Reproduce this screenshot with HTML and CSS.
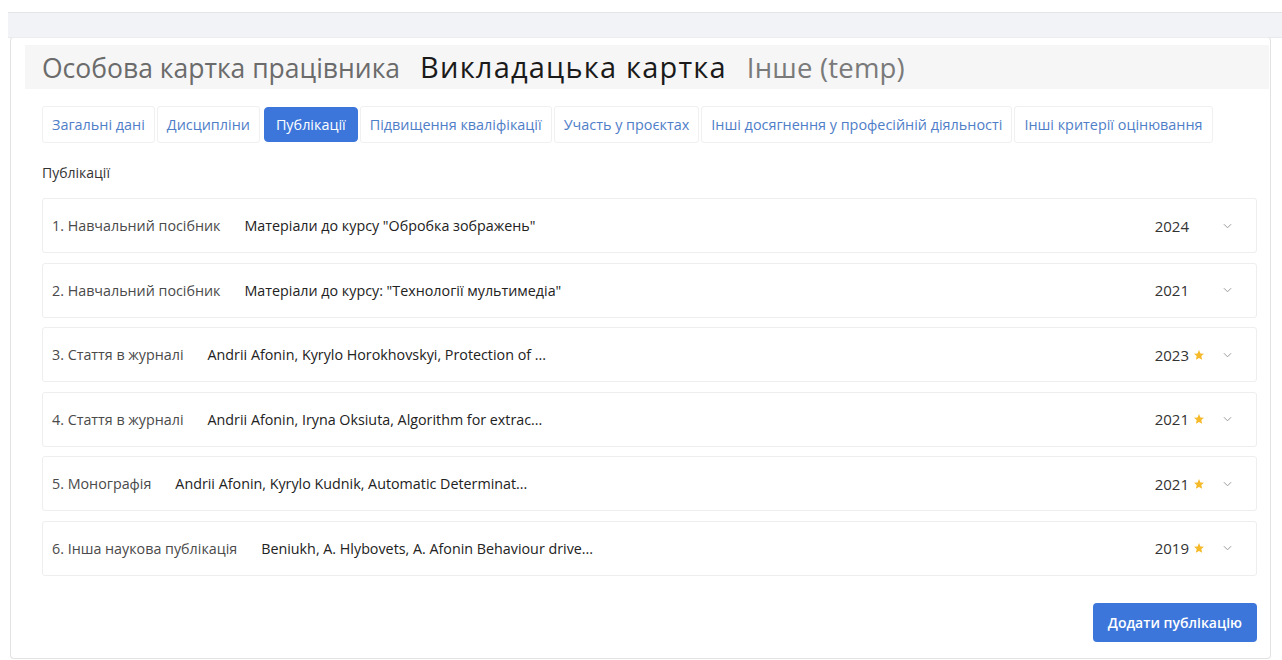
FILE: index.html
```html
<!DOCTYPE html>
<html lang="uk">
<head>
<meta charset="utf-8">
<title>Особова картка працівника</title>
<link rel="stylesheet" href="styles.css">
</head>
<body>
<div class="topbar"></div>
<main class="card">
  <header class="card-head">
    <h1 class="title">
      <span class="muted">Особова картка працівника</span>
      <span class="strong">Викладацька картка</span>
      <span class="muted light">Інше (temp)</span>
    </h1>
  </header>
  <div class="card-body">
    <nav class="tabs">
      <a class="tab">Загальні дані</a>
      <a class="tab">Дисципліни</a>
      <a class="tab active">Публікації</a>
      <a class="tab">Підвищення кваліфікації</a>
      <a class="tab">Участь у проєктах</a>
      <a class="tab">Інші досягнення у професійній діяльності</a>
      <a class="tab">Інші критерії оцінювання</a>
    </nav>
    <div class="section-label">Публікації</div>
    <ul class="pub-list">
      <li class="pub">
        <span class="pub-type">1. Навчальний посібник</span>
        <span class="pub-title">Матеріали до курсу "Обробка зображень"</span>
        <span class="pub-year">2024</span>
        <span class="star empty"></span>
        <svg class="chev" viewBox="0 0 10 6"><path d="M1 1l4 4 4-4"/></svg>
      </li>
      <li class="pub">
        <span class="pub-type">2. Навчальний посібник</span>
        <span class="pub-title">Матеріали до курсу: "Технології мультимедіа"</span>
        <span class="pub-year">2021</span>
        <span class="star empty"></span>
        <svg class="chev" viewBox="0 0 10 6"><path d="M1 1l4 4 4-4"/></svg>
      </li>
      <li class="pub">
        <span class="pub-type">3. Стаття в журналі</span>
        <span class="pub-title">Andrii Afonin, Kyrylo Horokhovskyi, Protection of ...</span>
        <span class="pub-year">2023</span>
        <svg class="star" viewBox="0 0 24 24"><path d="M12 2l2.9 6.9 7.1.6-5.4 4.7 1.7 7.3L12 17.8l-6.3 3.7 1.7-7.3L2 9.5l7.1-.6z"/></svg>
        <svg class="chev" viewBox="0 0 10 6"><path d="M1 1l4 4 4-4"/></svg>
      </li>
      <li class="pub">
        <span class="pub-type">4. Стаття в журналі</span>
        <span class="pub-title">Andrii Afonin, Iryna Oksiuta, Algorithm for extrac...</span>
        <span class="pub-year">2021</span>
        <svg class="star" viewBox="0 0 24 24"><path d="M12 2l2.9 6.9 7.1.6-5.4 4.7 1.7 7.3L12 17.8l-6.3 3.7 1.7-7.3L2 9.5l7.1-.6z"/></svg>
        <svg class="chev" viewBox="0 0 10 6"><path d="M1 1l4 4 4-4"/></svg>
      </li>
      <li class="pub">
        <span class="pub-type">5. Монографія</span>
        <span class="pub-title">Andrii Afonin, Kyrylo Kudnik, Automatic Determinat...</span>
        <span class="pub-year">2021</span>
        <svg class="star" viewBox="0 0 24 24"><path d="M12 2l2.9 6.9 7.1.6-5.4 4.7 1.7 7.3L12 17.8l-6.3 3.7 1.7-7.3L2 9.5l7.1-.6z"/></svg>
        <svg class="chev" viewBox="0 0 10 6"><path d="M1 1l4 4 4-4"/></svg>
      </li>
      <li class="pub">
        <span class="pub-type">6. Інша наукова публікація</span>
        <span class="pub-title">Beniukh, A. Hlybovets, A. Afonin Behaviour drive...</span>
        <span class="pub-year">2019</span>
        <svg class="star" viewBox="0 0 24 24"><path d="M12 2l2.9 6.9 7.1.6-5.4 4.7 1.7 7.3L12 17.8l-6.3 3.7 1.7-7.3L2 9.5l7.1-.6z"/></svg>
        <svg class="chev" viewBox="0 0 10 6"><path d="M1 1l4 4 4-4"/></svg>
      </li>
    </ul>
    <div class="actions">
      <button class="btn-primary">Додати публікацію</button>
    </div>
  </div>
</main>
</body>
</html>
```

FILE: styles.css
```css
* { box-sizing: border-box; }

html, body {
  margin: 0;
  padding: 0;
  background: #ffffff;
  font-family: "Open Sans", "Noto Sans", sans-serif;
  color: #333;
}

.topbar {
  margin-top: 12px;
  margin-left: 8px;
  height: 26px;
  background: #f2f3f7;
  border-top: 1px solid #e4e5e9;
  border-bottom: 1px solid #e8e9ee;
}

.card {
  margin: -1px 11px 0 10px;
  height: 622px;
  border: 1px solid #e2e2e2;
  border-top-color: #ececec;
  border-radius: 4px;
  background: #fff;
  display: flex;
  flex-direction: column;
}

.card-head {
  margin: 7px 1px 0 14px;
  height: 44px;
  background: #f6f6f6;
  display: flex;
  align-items: center;
  padding-left: 17px;
}

.title {
  margin: 0;
  font-size: 26.5px;
  font-weight: 400;
  line-height: 1;
  display: flex;
  align-items: baseline;
  gap: 20px;
}
.title .muted { color: #6b6b6b; }
.title .light { color: #7a7a7a; font-size: 27.5px; letter-spacing: 0.2px; }
.title .strong {
  color: #1a1a1a;
  font-size: 29px;
  font-weight: 500;
  letter-spacing: 1.2px;
}

.card-body {
  padding: 17px 13px 0 31px;
  display: flex;
  flex-direction: column;
}

.tabs {
  display: flex;
  gap: 2px;
  height: 37px;
}
.tab {
  display: flex;
  align-items: center;
  padding: 0 9px;
  font-size: 14.4px;
  color: #4f7ec8;
  border: 1px solid #f0f0f0;
  border-radius: 3px;
  background: #fff;
}
.tab.active {
  background: #3c76db;
  border-color: #3c76db;
  color: #fff;
  margin: 1px 0 1px 2px;
  padding: 0 11px;
  border-radius: 4px;
}

.section-label {
  margin-top: 20px;
  font-size: 14px;
  color: #333;
  height: 20px;
}

.pub-list {
  list-style: none;
  margin: 15px 0 0;
  padding: 0;
  display: flex;
  flex-direction: column;
  gap: 9.5px;
}
.pub {
  height: 55px;
  border: 1px solid #eeeeee;
  border-radius: 3px;
  display: flex;
  align-items: center;
  padding: 0 24px 0 9px;
  font-size: 14.3px;
}
.pub-type { color: #4a4a4a; }
.pub-title { color: #222; margin-left: 24px; flex: 1; }
.pub-year { color: #333; font-size: 15px; }
.star {
  width: 12px;
  height: 12px;
  margin-left: 4px;
  fill: #f6b928;
}
.star.empty { visibility: hidden; }
.chev {
  width: 9px;
  height: 6px;
  margin-left: 18px;
  fill: none;
  stroke: #9a9a9a;
  stroke-width: 1.1;
}

.actions {
  display: flex;
  justify-content: flex-end;
  margin-top: 27px;
}
.btn-primary {
  height: 39px;
  padding: 0 15px;
  border: none;
  border-radius: 4px;
  background: #3c76db;
  color: #fff;
  font-family: inherit;
  font-size: 14px;
  font-weight: 600;
}
```
